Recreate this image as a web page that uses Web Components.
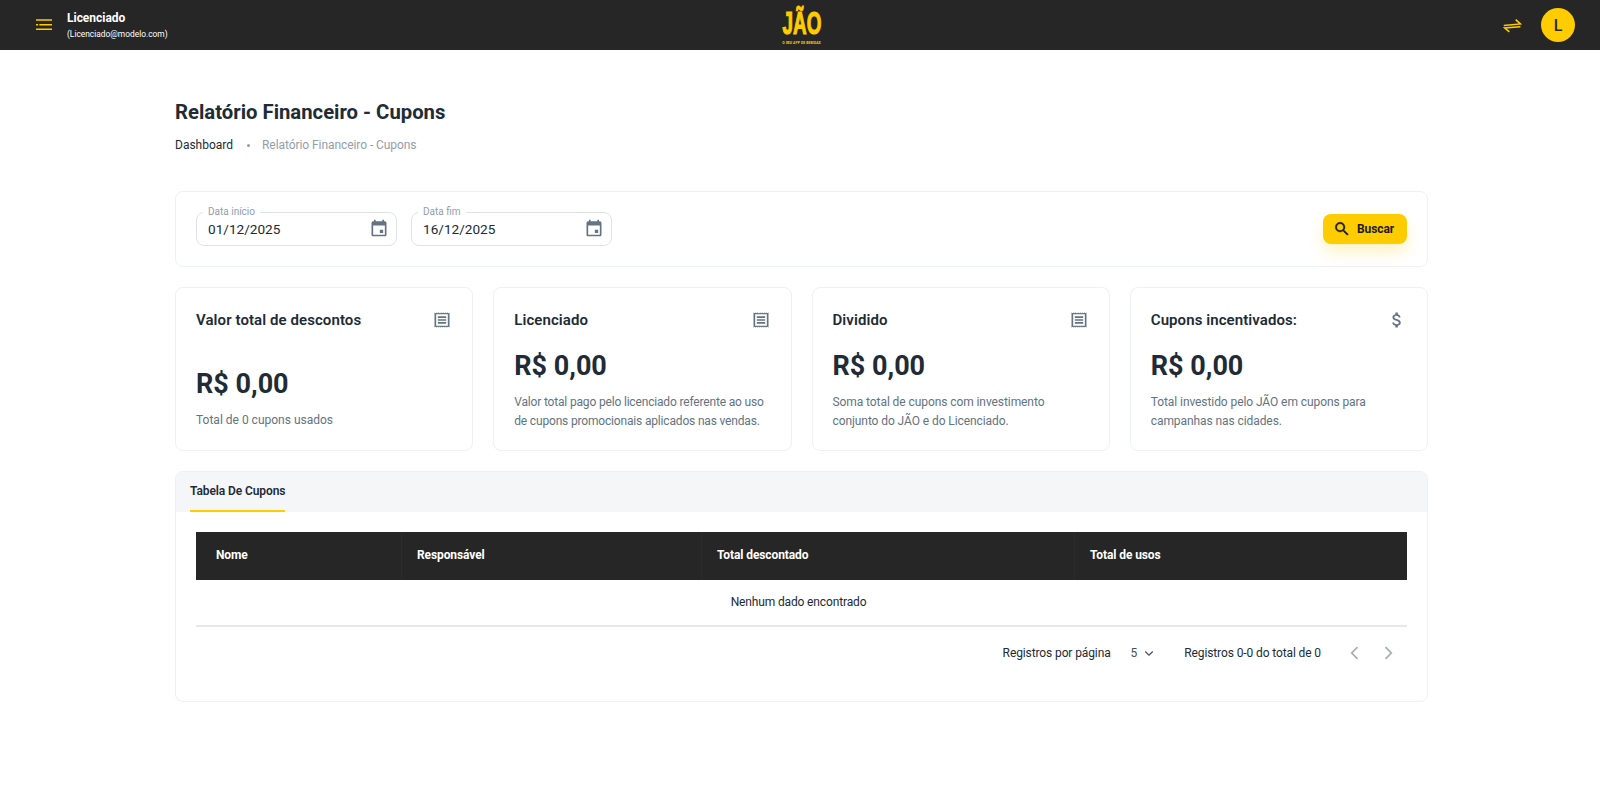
<!DOCTYPE html>
<html lang="pt-BR"><head><meta charset="utf-8"><title>Relatório Financeiro - Cupons</title>
<style>
html,body{margin:0;padding:0;background:#fff;font-family:Roboto,"Liberation Sans",sans-serif;color:#212b36;}
</style></head><body>
<app-page></app-page>
<script>
const ICONS={
 menu:'<path d="M3.600 6h19.200M3.600 11.600h2.600M7.600 11.600h15.200M3.600 17h19.200" fill="none" stroke="currentColor" stroke-width="1.900"/>',
 swap:'<path d="M1 12l21-2L16 4.500M22 13.500L2 15l6 5" fill="none" stroke="currentColor" stroke-width="2"/>',
 cal:'<path fill="currentColor" d="M19 4h-1V2h-2v2H8V2H6v2H5c-1.100 0-2 .9-2 2v14c0 1.100.9 2 2 2h14c1.100 0 2-.9 2-2V6c0-1.100-.9-2-2-2zm0 16H5V9h14v11zm-6-6h4v4h-4z"/>',
 search:'<path fill="currentColor" stroke="currentColor" stroke-width=".5" d="M15.500 14h-.79l-.28-.27A6.470 6.470 0 0 0 16 9.500 6.500 6.500 0 1 0 9.500 16c1.610 0 3.090-.59 4.230-1.570l.27.28v.79l5 4.990L20.490 19l-4.990-5zm-6 0C7.010 14 5 11.990 5 9.500S7.010 5 9.500 5 14 7.010 14 9.500 11.990 14 9.500 14z"/>',
 receipt:'<path fill="currentColor" fill-rule="evenodd" d="M3 3v18l1.200-.8 1.300.8 1.300-.8 1.200.8 1.300-.8 1.200.8 1.300-.8 1.200.8 1.300-.8 1.200.8 1.300-.8 1.200.8 1.300-.8L21 21V3l-1.200.8-1.300-.8-1.300.8-1.200-.8-1.300.8-1.200-.8-1.300.8-1.200-.8-1.300.8L7.500 3l-1.300.8L5 3l-.8.800zM5 5h14v14H5zM7 7.500h10v2H7zM7 11h10v2H7zM7 14.500h10v2H7z"/>',
 dollar:'<path fill="currentColor" d="M11.800 10.900c-2.270-.59-3-1.200-3-2.150 0-1.090 1.010-1.850 2.700-1.850 1.780 0 2.440.85 2.500 2.100h2.210c-.07-1.720-1.120-3.300-3.210-3.810V3h-3v2.160c-1.940.42-3.500 1.680-3.500 3.610 0 2.310 1.910 3.460 4.700 4.130 2.500.6 3 1.480 3 2.410 0 .69-.49 1.790-2.700 1.790-2.060 0-2.870-.92-2.980-2.100h-2.200c.12 2.190 1.760 3.420 3.680 3.830V21h3v-2.150c1.950-.37 3.500-1.500 3.500-3.550 0-2.840-2.430-3.810-4.700-4.400z"/>',
 down:'<path d="M7 10l5 5 5-5" fill="none" stroke="currentColor" stroke-width="1.600"/>',
 left:'<path d="M15 5l-7 7 7 7" fill="none" stroke="currentColor" stroke-width="2"/>',
 right:'<path d="M9 5l7 7-7 7" fill="none" stroke="currentColor" stroke-width="2"/>'
};
function def(name,html,setup){
 const t=document.createElement('template');t.innerHTML=html;
 customElements.define(name,class extends HTMLElement{
  constructor(){super();this.attachShadow({mode:'open'}).appendChild(t.content.cloneNode(true));}
  connectedCallback(){setup&&setup.call(this,this.shadowRoot);}
 });
}
def('app-icon','<style>:host{display:inline-flex;width:var(--s,24px);height:var(--s,24px);flex:none}svg{width:100%;height:100%;display:block}</style><svg viewBox="0 0 24 24"></svg>',function(r){r.querySelector('svg').innerHTML=ICONS[this.getAttribute('name')]||''});

def('app-header',`<style>
:host{display:flex;align-items:center;height:50px;background:#262626;padding:0 25px 0 33px;box-sizing:border-box;position:relative;color:#fff}
.m{color:#ffcc00;--s:20px;margin-right:14px;display:flex}
.u{display:flex;flex-direction:column;gap:4px}
.n{font-size:12px;font-weight:700;line-height:14px;letter-spacing:-.02px}
.e{font-size:8.400px;line-height:10px;font-weight:400}
.logo{position:absolute;left:calc(50% + 1.500px);top:7px;transform:translateX(-50%);display:flex;flex-direction:column;align-items:center;color:#ffcc00}
.big{font:700 32px/32px "Liberation Sans",sans-serif;display:block;transform:scaleX(.59);height:34px;-webkit-text-stroke:1.200px #ffcc00}
.sm{font:700 3.400px/4px Roboto,sans-serif;letter-spacing:.1px;white-space:nowrap}
.sp{flex:1}
.sw{color:#ffcc00;--s:19px;margin-right:19px;display:flex}
.av{width:34px;height:34px;border-radius:50%;background:#ffcc00;color:#212b36;display:flex;align-items:center;justify-content:center;font-weight:500;font-size:16px}
</style>
<span class="m"><app-icon name="menu"></app-icon></span>
<div class="u"><span class="n">Licenciado</span><span class="e">(Licenciado@modelo.com)</span></div>
<div class="logo"><span class="big">JÃO</span><span class="sm">O SEU APP DE BEBIDAS</span></div>
<span class="sp"></span>
<span class="sw"><app-icon name="swap"></app-icon></span>
<div class="av">L</div>`);

def('app-date',`<style>
:host{display:block;width:201px;height:34px;position:relative;box-sizing:border-box;border:1px solid #dfe3e8;border-radius:8px;font-size:13.600px;color:#212b36}
.l{position:absolute;left:6px;top:-7px;padding:0 5px;background:#fff;font-size:10px;line-height:12px;color:#919eab}
.v{position:absolute;left:11px;top:7px;line-height:18px}
.i{position:absolute;right:7px;top:5px;color:#637381;--s:20px;display:flex}
</style><span class="l"></span><span class="v"></span><span class="i"><app-icon name="cal"></app-icon></span>`,function(r){r.querySelector('.l').textContent=this.getAttribute('label');r.querySelector('.v').textContent=this.getAttribute('value');});

def('app-button',`<style>
:host{display:inline-flex;align-items:center;height:30px;padding:0 13px 0 10px;gap:6px;background:#ffcc00;border-radius:8px;box-shadow:0 8px 16px rgba(255,204,0,.24);font-size:12px;font-weight:700;color:#1a1a1a;--s:18px;box-sizing:border-box;width:84px;letter-spacing:-.1px}
</style><app-icon name="search"></app-icon><slot></slot>`);

def('app-filter',`<style>
:host{display:flex;align-items:center;box-sizing:border-box;height:76px;border:1px solid #eef0f2;border-radius:8px;padding:0 20px;gap:14px;background:#fff}
.sp{flex:1}
</style><app-date label="Data início" value="01/12/2025"></app-date><app-date label="Data fim" value="16/12/2025"></app-date><span class="sp"></span><app-button>Buscar</app-button>`);

def('app-stat',`<style>
:host{display:flex;flex-direction:column;box-sizing:border-box;height:164px;border:1px solid #eef0f2;border-radius:8px;padding:21px 20px 0 20px;background:#fff}
.h{display:flex;justify-content:space-between;align-items:center;height:22px}
.t{font-size:15px;font-weight:600;color:#212b36;letter-spacing:.08px}
.i{color:#637381;--s:20px;display:flex}
.b{flex:1;display:flex;flex-direction:column;margin-top:17px}
:host([tall]) .b{margin-top:35px}
.v{font-size:27px;font-weight:700;line-height:36px;color:#212b36}
.d{font-size:12px;line-height:18.500px;color:#637381;margin-top:9px;letter-spacing:var(--ls,-.08px)}
:host([tall]) .d{letter-spacing:0}
</style><div class="h"><span class="t"></span><span class="i"><app-icon></app-icon></span></div><div class="b"><span class="v">R$ 0,00</span><span class="d"><slot></slot></span></div>`,function(r){r.querySelector('.t').textContent=this.getAttribute('title');const ic=r.querySelector('app-icon');ic.setAttribute('name',this.getAttribute('icon')||'receipt');ic.shadowRoot.querySelector('svg').innerHTML=ICONS[ic.getAttribute('name')];});

def('app-table',`<style>
:host{display:block;box-sizing:border-box;height:231px;border:1px solid #eef0f2;border-radius:8px;overflow:hidden;background:#fff}
.tabs{height:40px;background:#f4f6f8;padding:0 14px;display:flex;box-sizing:border-box}
.tab{height:40px;box-sizing:border-box;border-bottom:2px solid #ffcc00;font-size:12px;font-weight:600;line-height:23px;color:#212b36;padding-top:8px;width:95px;white-space:nowrap;letter-spacing:-.1px}
.body{padding:20px 20px 0}
.head{display:grid;grid-template-columns:206px 300px 373px 1fr;height:48px;background:#262626;color:#fff;font-size:12px;font-weight:700;align-items:stretch;letter-spacing:-.1px}
.head span{display:flex;align-items:center;box-sizing:border-box;padding-left:15px;border-right:1px solid #2b2b2b;padding-bottom:2px}
.head span:nth-child(1){padding-left:20px}
.head span:nth-child(4){border-right:0}
.empty{height:47px;box-sizing:border-box;border-bottom:2px solid #e6e8eb;padding:0 6px 2px 0;display:flex;align-items:center;justify-content:center;font-size:12px;color:#212b36;letter-spacing:-.14px}
.pg{display:flex;align-items:center;justify-content:flex-end;height:52px;font-size:12px;color:#212b36;padding-right:9px;letter-spacing:-.11px}
.sel{display:flex;align-items:center;margin-left:20px;color:#454f5b;gap:3px;--s:18px}
.rec{margin-left:26px}
.nav{display:flex;--s:20px;color:#a5adb5;margin-left:24px;gap:13px}
</style><div class="tabs"><div class="tab">Tabela De Cupons</div></div>
<div class="body"><div class="head"><span>Nome</span><span>Responsável</span><span>Total descontado</span><span>Total de usos</span></div>
<div class="empty">Nenhum dado encontrado</div>
<div class="pg"><span>Registros por página</span><span class="sel">5<app-icon name="down"></app-icon></span><span class="rec">Registros 0-0 do total de 0</span><span class="nav"><app-icon name="left"></app-icon><app-icon name="right"></app-icon></span></div></div>`);

def('app-page',`<style>
:host{display:block;height:798px;overflow:hidden}
main{padding:0 172px 0 175px;box-sizing:border-box}
h1{margin:0;font-size:20.300px;font-weight:700;line-height:28px;color:#212b36;padding-top:48px}
.bc{display:flex;align-items:center;font-size:12px;line-height:18px;margin-top:10px;color:#212b36}
.bc i{width:3px;height:3px;border-radius:50%;background:#919eab;margin:0 12px 0 14px}
.bc span:last-child{color:#919eab;letter-spacing:-.07px}
.f{margin-top:37px}
.g{display:grid;grid-template-columns:repeat(4,1fr);gap:20px;margin:20px 0}
</style><app-header></app-header><main><h1>Relatório Financeiro - Cupons</h1>
<div class="bc"><span>Dashboard</span><i></i><span>Relatório Financeiro - Cupons</span></div>
<app-filter class="f"></app-filter>
<div class="g">
<app-stat title="Valor total de descontos" tall>Total de 0 cupons usados</app-stat>
<app-stat title="Licenciado" style="--ls:-.17px">Valor total pago pelo licenciado referente ao uso de cupons promocionais aplicados nas vendas.</app-stat>
<app-stat title="Dividido">Soma total de cupons com investimento conjunto do JÃO e do Licenciado.</app-stat>
<app-stat title="Cupons incentivados:" icon="dollar">Total investido pelo JÃO em cupons para campanhas nas cidades.</app-stat>
</div>
<app-table></app-table></main>`);
</script></body></html>
